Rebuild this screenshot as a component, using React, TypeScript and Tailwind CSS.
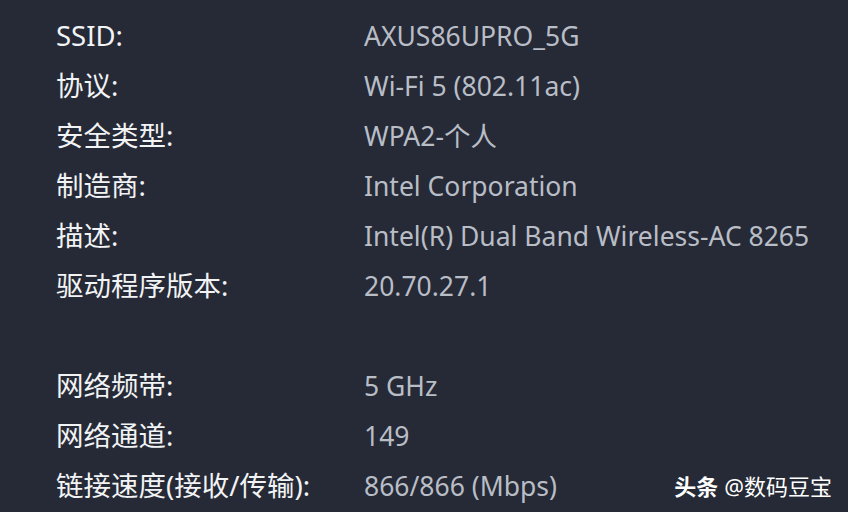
const rows: [string, string][] = [
  ['SSID:', 'AXUS86UPRO_5G'],
  ['协议:', 'Wi-Fi 5 (802.11ac)'],
  ['安全类型:', 'WPA2-个人'],
  ['制造商:', 'Intel Corporation'],
  ['描述:', 'Intel(R) Dual Band Wireless-AC 8265'],
  ['驱动程序版本:', '20.70.27.1'],
  ['', ''],
  ['网络频带:', '5 GHz'],
  ['网络通道:', '149'],
  ['链接速度(接收/传输):', '866/866 (Mbps)'],
];

const App = () => {
  return (
    <div className="relative h-[512px] w-[848px] overflow-hidden bg-[#252a36] pl-[56px] pt-[11px] font-['Noto_Sans','Noto_Sans_CJK_SC',sans-serif] text-[26.5px]">
      <div className="grid grid-cols-[308px_1fr]">
        {rows.map(([label, value], i) => (
          <div key={i} className="contents">
            <div className="h-[50px] whitespace-nowrap text-[27.5px] leading-[50px] text-[#f2f3f5]">{label}</div>
            <div className="h-[50px] whitespace-nowrap leading-[50px] text-[#b9bdc6]">{value}</div>
          </div>
        ))}
      </div>
      <div className="absolute bottom-[15px] right-[16px] flex items-center gap-[6px] text-[22px] leading-none text-white">
        <span className="font-bold">头条</span>
        <span>@数码豆宝</span>
      </div>
    </div>
  );
};

export default App;
